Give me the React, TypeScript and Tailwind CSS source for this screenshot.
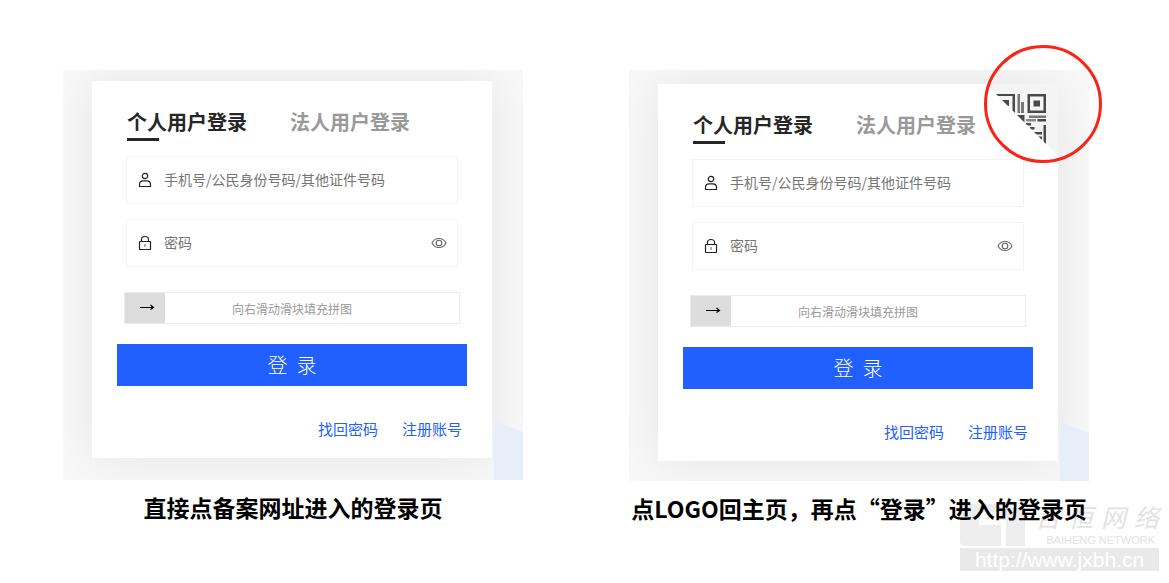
import type { ReactNode } from "react";

const FONT = "font-['Noto_Sans_CJK_SC',sans-serif]";

function UserIcon() {
  return (
    <svg className="size-4 shrink-0" viewBox="0 0 16 16" fill="none" stroke="#222" strokeWidth="1.2">
      <circle cx="8" cy="4" r="2.700" />
      <path d="M2.500 14.500v-2c0-2.200 1.500-3.700 3.700-3.700h3.600c2.200 0 3.700 1.500 3.700 3.700v2z" />
    </svg>
  );
}

function LockIcon() {
  return (
    <svg className="size-4 shrink-0" viewBox="0 0 16 16" fill="none" stroke="#222" strokeWidth="1.2">
      <rect x="2.500" y="6.500" width="11" height="8" rx="0.600" />
      <path d="M4.500 6.500V4.500a3.500 3 0 0 1 7 0v2" />
      <path d="M8 9v3" stroke="#777" />
    </svg>
  );
}

function EyeIcon() {
  return (
    <svg className="size-4" viewBox="0 0 16 16" fill="none" stroke="#666" strokeWidth="1.100">
      <path d="M1 8c1.400-2.900 4-4.500 7-4.500S13.600 5.100 15 8c-1.400 2.900-4 4.500-7 4.500S2.400 10.900 1 8z" />
      <circle cx="8" cy="8" r="2.800" />
    </svg>
  );
}

function QrCorner() {
  return (
    <svg className="absolute top-0 right-0 size-[72px]" viewBox="0 0 72 72">
      <path d="M0 0h72v72z" fill="#f4f4f4" />
      <clipPath id="fold">
        <path d="M10 10h50v50z" />
      </clipPath>
      <g clipPath="url(#fold)" fill="#4a4a4a">
        <path d="M10 10h19v19H10zM12 12v14.500h14.500V12z" fillRule="evenodd" />
        <rect x="15" y="16" width="8" height="6" />
        <rect x="31.500" y="10" width="2.500" height="19" fill="#777" />
        <rect x="35" y="18" width="3" height="11" fill="#777" />
        <path d="M41.500 10H60v19H41.500zM44 12.500v14h13.500v-14z" fillRule="evenodd" />
        <rect x="47.500" y="16.500" width="6.500" height="6" />
        <rect x="31" y="31" width="7.500" height="7" />
        <rect x="43" y="31.500" width="17" height="2.500" fill="#777" />
        <rect x="40" y="35" width="10" height="2.500" fill="#8a8a8a" />
        <rect x="51.500" y="35" width="8.500" height="2.500" />
        <rect x="40" y="39" width="5" height="2.500" />
        <rect x="44" y="43" width="4.500" height="2.500" />
        <rect x="46" y="48" width="10" height="2.500" />
        <rect x="51" y="52.500" width="5" height="3" />
        <rect x="57.500" y="41" width="2.500" height="19" />
      </g>
    </svg>
  );
}

function LoginShot({ id, corner, caption }: { id: string; corner?: boolean; caption: ReactNode }) {
  return (
    <figure className="relative flex w-[460px] flex-col items-center">
      <div className={`relative w-full overflow-hidden bg-[#f8f8f8] pr-[31px] pl-[29px] ${corner ? "pt-[14px] pb-5" : "pt-[11px] pb-[22px]"}`}>
        <form className="relative bg-white px-[25px] pt-[29px] pb-[17px] shadow-[0_0_50px_rgba(0,0,0,0.08)]" onSubmit={(e) => e.preventDefault()}>
          <div className="flex gap-[43px] px-[10px] text-[20px] leading-6 font-bold">
            <button type="button" className="flex flex-col text-[#262626]">
              个人用户登录
              <span className="mt-1 h-[3px] w-8 bg-[#262626]" />
            </button>
            <button type="button" className="flex text-[#999]">法人用户登录</button>
          </div>

          <div className="mx-[9px] mt-[15px] flex h-12 items-center gap-[11px] border border-[#f3f3f3] px-[10px]">
            <UserIcon />
            <input
              id={`${id}-account`}
              aria-label="账号"
              placeholder="手机号/公民身份号码/其他证件号码"
              className="h-6 min-w-0 flex-1 pb-[2px] text-[14px] outline-none placeholder:text-[#757575]"
            />
          </div>
          <div className="mx-[9px] mt-[15px] flex h-12 items-center gap-[11px] border border-[#f3f3f3] px-[10px]">
            <LockIcon />
            <input
              id={`${id}-password`}
              type="password"
              aria-label="密码"
              placeholder="密码"
              className="h-6 min-w-0 flex-1 pb-[2px] text-[14px] outline-none placeholder:text-[#757575]"
            />
            <button type="button" aria-label="显示密码"><EyeIcon /></button>
          </div>

          <div className="mx-[7px] mt-[25px] grid h-8 grid-cols-[40px_1fr_40px] grid-rows-[30px] border border-[#ebebeb]">
            <button type="button" aria-label="滑块" className="flex items-center justify-center bg-[#ddd] pb-[2px] pl-1">
              <svg className="h-3 w-4" viewBox="0 0 16 12" fill="none" stroke="#000" strokeWidth="1.200">
                <path d="M1 6.500h13.500M11.500 4l3 2.500-3 2" />
              </svg>
            </button>
            <span className="text-center text-[12px] leading-8 text-[#999]">向右滑动滑块填充拼图</span>
          </div>

          <button type="submit" className="mt-5 block h-[42px] w-full bg-[#2160ff] text-[20px] font-light whitespace-pre text-white">登  录</button>

          <div className="mt-[31px] flex justify-end gap-6 pr-[5px] text-[15px] leading-6 text-[#2160ff]">
            <a href="#forgot">找回密码</a>
            <a href="#register">注册账号</a>
          </div>
          {corner && <QrCorner />}
        </form>
        <svg className="absolute right-0 bottom-0 h-[59px] w-[30px]" viewBox="0 0 30 59">
          <path d="M1 0l29 11v48H1z" fill="#e8eef8" />
        </svg>
      </div>
      {corner && <div className="absolute -top-[25px] -right-[13px] size-[118px] rounded-full border-[3px] border-[#fb2216]" />}
      <figcaption className="relative mt-[10px] text-[23px] leading-[34px] font-bold whitespace-nowrap text-black">{caption}</figcaption>
    </figure>
  );
}

function Watermark() {
  return (
    <div className="absolute right-[10px] bottom-3 w-[199px] text-[#e2e2e2]">
      <div className="flex items-end justify-between pb-[2px]">
        <svg className="h-[43px] w-[66px]" viewBox="0 0 66 43" fill="#ededed">
          <path d="M8 1h33v8H25c-4 0-6 2-6 5v8h22v21H5c-3 0-5-2-5-5V9c0-5 3-8 8-8z" />
          <path d="M44 5h18c2 0 3 1 3 3v35H46V17h-6v-8z" />
        </svg>
        <div className="flex flex-col items-end">
          <div className="flex gap-2 text-[25px] leading-9 italic">
            <span>百</span>
            <span>恒</span>
            <span>网</span>
            <span>络</span>
          </div>
          <span className="pr-1 font-['Liberation_Sans',sans-serif] text-[11px] leading-3 whitespace-nowrap">BAIHENG NETWORK</span>
        </div>
      </div>
      <div className="bg-[#e9e9e9] text-center font-['Liberation_Sans',sans-serif] text-[21px] leading-[23px] text-white">http://www.jxbh.cn</div>
    </div>
  );
}

export default function App() {
  return (
    <main className={`relative flex min-h-screen items-start gap-[106px] bg-white px-[63px] pt-[70px] ${FONT}`}>
      <Watermark />
      <LoginShot id="direct" caption="直接点备案网址进入的登录页" />
      <LoginShot id="home" corner caption="点LOGO回主页，再点“登录”进入的登录页" />
    </main>
  );
}
